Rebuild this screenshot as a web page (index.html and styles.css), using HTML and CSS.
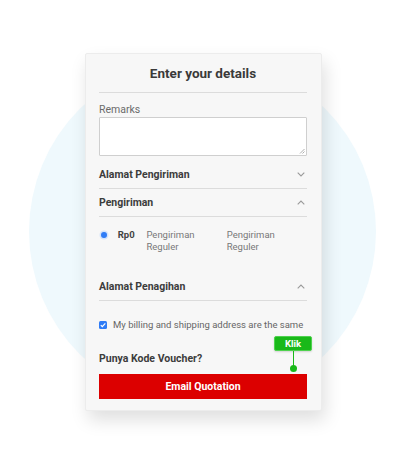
FILE: index.html
```html
<!DOCTYPE html>
<html>
<head>
<meta charset="utf-8">
<link rel="stylesheet" href="styles.css">
</head>
<body>
<div class="stage">
  <div class="circle"></div>
  <div class="card">
    <h1 class="title">Enter your details</h1>
    <label class="label">Remarks</label>
    <div class="textarea">
      <svg class="grip" width="6" height="6" viewBox="0 0 6 6"><path d="M5.5 1 L1 5.5 M5.5 3.5 L3.5 5.5" stroke="#999" stroke-width="0.8" fill="none"/></svg>
    </div>
    <div class="section">
      <span>Alamat Pengiriman</span>
      <svg class="chev" width="8" height="5" viewBox="0 0 8 5"><path d="M0.7 0.7 L4 4 L7.3 0.7" stroke="#9a9a9a" stroke-width="1.1" fill="none"/></svg>
    </div>
    <div class="section">
      <span>Pengiriman</span>
      <svg class="chev" width="8" height="5" viewBox="0 0 8 5"><path d="M0.7 4.3 L4 1 L7.3 4.3" stroke="#9a9a9a" stroke-width="1.1" fill="none"/></svg>
    </div>
    <div class="ship">
      <span class="radio"></span>
      <span class="price">Rp0</span>
      <span class="svc">Pengiriman<br>Reguler</span>
      <span class="svc">Pengiriman<br>Reguler</span>
    </div>
    <div class="section">
      <span>Alamat Penagihan</span>
      <svg class="chev" width="8" height="5" viewBox="0 0 8 5"><path d="M0.7 4.3 L4 1 L7.3 4.3" stroke="#9a9a9a" stroke-width="1.1" fill="none"/></svg>
    </div>
    <div class="check-row">
      <span class="check"><svg width="8" height="8" viewBox="0 0 8 8"><path d="M1.8 4.2 L3.3 5.7 L6.3 2.4" stroke="#fff" stroke-width="1.2" fill="none"/></svg></span>
      <span>My billing and shipping address are the same</span>
    </div>
    <div class="voucher">
      <span>Punya Kode Voucher?</span>
      <div class="klik">
        <span class="tag">Klik</span>
        <span class="stem"></span>
        <span class="dot"></span>
      </div>
    </div>
    <div class="button">Email Quotation</div>
  </div>
</div>
</body>
</html>
```
FILE: styles.css
```css
* { box-sizing: border-box; }
html, body { margin: 0; padding: 0; background: #ffffff; }
body {
  font-family: Roboto, "Liberation Sans", sans-serif;
  width: 405px;
  height: 475px;
  overflow: hidden;
}
.stage {
  position: relative;
  width: 405px;
  height: 475px;
  padding-top: 53px;
}
.circle {
  position: absolute;
  left: 29px;
  top: 58px;
  width: 347px;
  height: 347px;
  border-radius: 50%;
  background: #eff9fd;
}
.card {
  position: relative;
  margin-left: 85px;
  width: 237px;
  height: 358px;
  background: #f7f7f7;
  border: 1px solid #ececec;
  border-radius: 2px;
  box-shadow: 3px 9px 18px rgba(0, 0, 0, 0.13);
  padding: 10px 14px 0 13px;
  display: flex;
  flex-direction: column;
}
.title {
  margin: 0;
  font-size: 13.5px;
  line-height: 18px;
  font-weight: 700;
  color: #3a3a3a;
  text-align: center;
  padding-bottom: 10px;
  border-bottom: 1px solid #dcdcdc;
}
.label {
  display: block;
  margin-top: 10px;
  font-size: 10.5px;
  line-height: 14px;
  color: #6b6b6b;
}
.textarea {
  position: relative;
  height: 39px;
  background: #ffffff;
  border: 1px solid #cfcfcf;
  border-radius: 1px;
}
.grip { position: absolute; right: 1px; bottom: 1px; }
.section {
  display: flex;
  justify-content: space-between;
  align-items: center;
  height: 28px;
  border-bottom: 1px solid #dcdcdc;
  font-size: 10.5px;
  font-weight: 700;
  color: #3c3c3c;
}
.textarea + .section { margin-top: 5px; }
.chev { margin-right: 2px; }
.ship {
  display: flex;
  align-items: flex-start;
  padding-top: 12px;
  height: 56px;
  font-size: 9.5px;
  line-height: 12px;
  color: #777;
}
.radio {
  width: 6px;
  height: 6px;
  margin: 3px 0 0 2px;
  border-radius: 50%;
  background: #2f7cf6;
  box-shadow: 0 0 0 1.5px #d3e3fb;
}
.price {
  margin-left: 11px;
  width: 30px;
  font-weight: 700;
  color: #444;
}
.svc { width: 84px; }
.check-row {
  display: flex;
  align-items: center;
  gap: 6px;
  margin-top: 18px;
  font-size: 9.5px;
  line-height: 12px;
  color: #666;
}
.check {
  width: 8px;
  height: 8px;
  border-radius: 1.5px;
  background: #2f7cf6;
  display: flex;
}
.voucher {
  position: relative;
  margin-top: 21px;
  font-size: 10.5px;
  line-height: 14px;
  font-weight: 700;
  color: #3c3c3c;
}
.klik {
  position: absolute;
  left: 175px;
  top: -16px;
  width: 38px;
  display: flex;
  flex-direction: column;
  align-items: center;
}
.tag {
  width: 38px;
  height: 15px;
  background: #19b919;
  border: 1px solid #4fd24f;
  border-radius: 2px;
  color: #fff;
  font-size: 9.5px;
  line-height: 13px;
  font-weight: 700;
  text-align: center;
  box-shadow: 0 1px 2px rgba(0,0,0,0.15);
}
.stem {
  width: 1px;
  height: 15px;
  background: #19b919;
}
.dot {
  width: 7px;
  height: 7px;
  margin-top: -1px;
  border-radius: 50%;
  background: #19b919;
}
.button {
  margin-top: 8px;
  height: 25px;
  background: #dc0000;
  color: #fff;
  font-size: 10.5px;
  font-weight: 700;
  display: flex;
  align-items: center;
  justify-content: center;
}
```
